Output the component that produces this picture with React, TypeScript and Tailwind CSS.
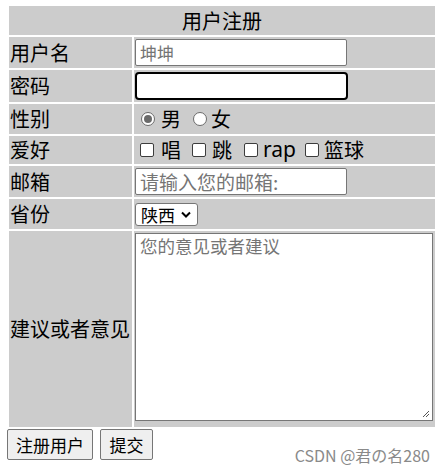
import React from "react";

const font = "font-['Noto_Sans_CJK_SC','Noto_Sans',sans-serif]";

function Radio({ checked }: { checked?: boolean }) {
  return (
    <span className="flex shrink-0 w-[14px] h-[14px] rounded-full border border-[#6b6b6b] bg-white items-center justify-center">
      {checked && <span className="w-[8px] h-[8px] rounded-full bg-[#6b6b6b]" />}
    </span>
  );
}

function Check() {
  return <span className="block shrink-0 w-[14px] h-[14px] rounded-[2px] border border-[#3c3c3c] bg-white" />;
}

export default function App() {
  const label = "bg-[#cccccc] flex items-center pl-px text-[20px] text-black leading-none";
  const cell = "bg-[#cccccc] flex items-center pl-px";
  return (
    <div className={`relative w-[444px] h-[472px] bg-white ${font}`}>
      <div className="pt-[6px] pl-[9px]">
        <div className="grid grid-cols-[123px_301px] grid-rows-[29px_31px_32px_30px_28px_31px_30px_196px] gap-[2px]">
          <div className="col-span-2 bg-[#cccccc] flex items-center justify-center text-[20px] leading-none">用户注册</div>

          <div className={label}>用户名</div>
          <div className={cell}>
            <div className="w-[212px] h-[27px] border border-[#767676] rounded-[2px] bg-white flex items-center pl-[4px] text-[17px] leading-none text-[#757575]">坤坤</div>
          </div>

          <div className={label}>密码</div>
          <div className={cell}>
            <div className="w-[213px] h-[28px] border-2 border-black rounded-[4px] bg-white" />
          </div>

          <div className={label}>性别</div>
          <div className="bg-[#cccccc] flex items-center pl-[7px] text-[20px] leading-none">
            <Radio checked />
            <span className="ml-[6px]">男</span>
            <span className="ml-[12px] flex"><Radio /></span>
            <span className="ml-[4px]">女</span>
          </div>

          <div className={label}>爱好</div>
          <div className="bg-[#cccccc] flex items-center pl-[6px] text-[20px] leading-none">
            <Check />
            <span className="ml-[7px]">唱</span>
            <span className="ml-[11px] flex"><Check /></span>
            <span className="ml-[6px]">跳</span>
            <span className="ml-[12px] flex"><Check /></span>
            <span className="ml-[5px] w-[37px] font-['Noto_Sans',sans-serif] text-[21px] leading-none pb-[2px]">rap</span>
            <span className="ml-[5px] flex"><Check /></span>
            <span className="ml-[5px]">篮球</span>
          </div>

          <div className={label}>邮箱</div>
          <div className={cell}>
            <div className="w-[212px] h-[27px] border border-[#767676] rounded-[2px] bg-white flex items-center pl-[4px] text-[19px] leading-none text-[#757575]">请输入您的邮箱:</div>
          </div>

          <div className={label}>省份</div>
          <div className={cell}>
            <div className="w-[63px] h-[23px] border border-[#767676] rounded-[3px] bg-white flex items-center pl-[5px] text-[17px] leading-none">
              <span>陕西</span>
              <svg className="ml-[6px]" width="10" height="7" viewBox="0 0 10 7">
                <path d="M1 1.5 L5 5.5 L9 1.5" fill="none" stroke="black" strokeWidth="2" />
              </svg>
            </div>
          </div>

          <div className={label}>建议或者意见</div>
          <div className="bg-[#cccccc] pl-px pt-[2px]">
            <div className="relative w-[298px] h-[188px] border border-[#767676] bg-white pl-[4px] pt-[1px] text-[17.5px] text-[#757575] leading-[22px]">
              您的意见或者建议
              <svg className="absolute right-[2px] bottom-[2px]" width="9" height="9" viewBox="0 0 9 9">
                <path d="M8 2 L2 8 M8 5 L5 8" stroke="#555" strokeWidth="1" />
              </svg>
            </div>
          </div>
        </div>
      </div>

      <div className="flex gap-[7px] pl-[7px] pt-[2px]">
        <div className="w-[86px] h-[31px] border border-[#767676] rounded-[2px] bg-[#efefef] flex items-center justify-center text-[17px]">注册用户</div>
        <div className="w-[53px] h-[31px] border border-[#767676] rounded-[2px] bg-[#efefef] flex items-center justify-center text-[17px]">提交</div>
      </div>

      <div className="absolute right-[14px] bottom-[9px] text-[16px] text-[#8a8a8a] leading-none">CSDN @君の名280</div>
    </div>
  );
}
